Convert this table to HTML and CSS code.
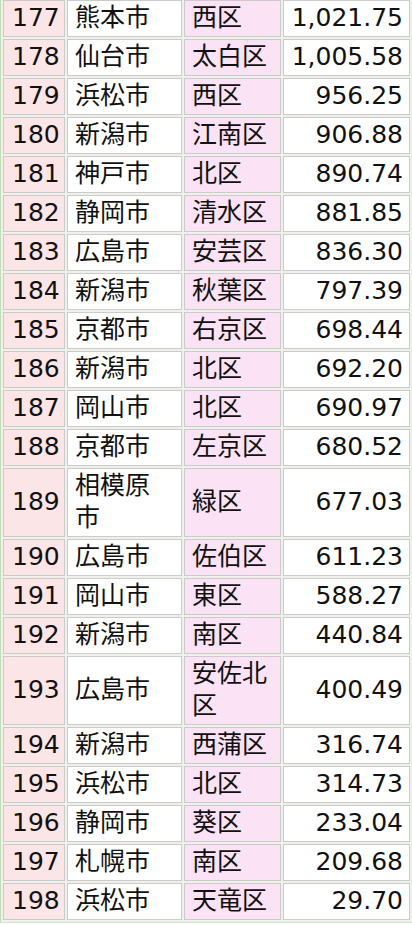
FILE: index.html
```html
<!DOCTYPE html>
<html lang="ja">
<head>
<meta charset="utf-8">
<link rel="stylesheet" href="styles.css">
</head>
<body>
<table class="ranking">
<colgroup><col class="c-rank"><col class="c-city"><col class="c-ward"><col class="c-area"></colgroup>
<tbody>
<tr><td class="rank">177</td><td class="city">熊本市</td><td class="ward">西区</td><td class="area">1,021.75</td></tr>
<tr><td class="rank">178</td><td class="city">仙台市</td><td class="ward">太白区</td><td class="area">1,005.58</td></tr>
<tr><td class="rank">179</td><td class="city">浜松市</td><td class="ward">西区</td><td class="area">956.25</td></tr>
<tr><td class="rank">180</td><td class="city">新潟市</td><td class="ward">江南区</td><td class="area">906.88</td></tr>
<tr><td class="rank">181</td><td class="city">神戸市</td><td class="ward">北区</td><td class="area">890.74</td></tr>
<tr><td class="rank">182</td><td class="city">静岡市</td><td class="ward">清水区</td><td class="area">881.85</td></tr>
<tr><td class="rank">183</td><td class="city">広島市</td><td class="ward">安芸区</td><td class="area">836.30</td></tr>
<tr><td class="rank">184</td><td class="city">新潟市</td><td class="ward">秋葉区</td><td class="area">797.39</td></tr>
<tr><td class="rank">185</td><td class="city">京都市</td><td class="ward">右京区</td><td class="area">698.44</td></tr>
<tr><td class="rank">186</td><td class="city">新潟市</td><td class="ward">北区</td><td class="area">692.20</td></tr>
<tr><td class="rank">187</td><td class="city">岡山市</td><td class="ward">北区</td><td class="area">690.97</td></tr>
<tr><td class="rank">188</td><td class="city">京都市</td><td class="ward">左京区</td><td class="area">680.52</td></tr>
<tr><td class="rank">189</td><td class="city">相模原市</td><td class="ward">緑区</td><td class="area">677.03</td></tr>
<tr><td class="rank">190</td><td class="city">広島市</td><td class="ward">佐伯区</td><td class="area">611.23</td></tr>
<tr><td class="rank">191</td><td class="city">岡山市</td><td class="ward">東区</td><td class="area">588.27</td></tr>
<tr><td class="rank">192</td><td class="city">新潟市</td><td class="ward">南区</td><td class="area">440.84</td></tr>
<tr><td class="rank">193</td><td class="city">広島市</td><td class="ward">安佐北区</td><td class="area">400.49</td></tr>
<tr><td class="rank">194</td><td class="city">新潟市</td><td class="ward">西蒲区</td><td class="area">316.74</td></tr>
<tr><td class="rank">195</td><td class="city">浜松市</td><td class="ward">北区</td><td class="area">314.73</td></tr>
<tr><td class="rank">196</td><td class="city">静岡市</td><td class="ward">葵区</td><td class="area">233.04</td></tr>
<tr><td class="rank">197</td><td class="city">札幌市</td><td class="ward">南区</td><td class="area">209.68</td></tr>
<tr><td class="rank">198</td><td class="city">浜松市</td><td class="ward">天竜区</td><td class="area">29.70</td></tr>
</tbody>
</table>
</body>
</html>
```

FILE: styles.css
```css
html, body {
  margin: 0;
  padding: 0;
  background: #ffffff;
}

.ranking {
  margin-top: -2px;
  width: 412px;
  table-layout: fixed;
  border-collapse: separate;
  border-spacing: 2px;
  border-left: 1px solid #c6dab8;
  border-bottom: 1px solid #d4e3ca;
  background: #eef2ea;
  font-family: "DejaVu Sans", "Noto Sans CJK JP", sans-serif;
  font-size: 25px;
  line-height: 32px;
  color: #111111;
}

.c-rank { width: 62px; }
.c-city { width: 115px; }
.c-ward { width: 97px; }
.c-area { width: 127px; }

.ranking td {
  box-sizing: border-box;
  border: 1px solid #cbcbcb;
  padding: 1px 4px 2px 7px;
  vertical-align: middle;
  white-space: normal;
  word-break: break-all;
}

.ranking td.rank {
  background: #fce5e7;
  padding-left: 8px;
}

.ranking td.city {
  background: #ffffff;
  padding-right: 10px;
}

.ranking td.ward {
  background: #fbe2f4;
}

.ranking td.area {
  background: #ffffff;
  text-align: right;
  padding-right: 6px;
}
```
